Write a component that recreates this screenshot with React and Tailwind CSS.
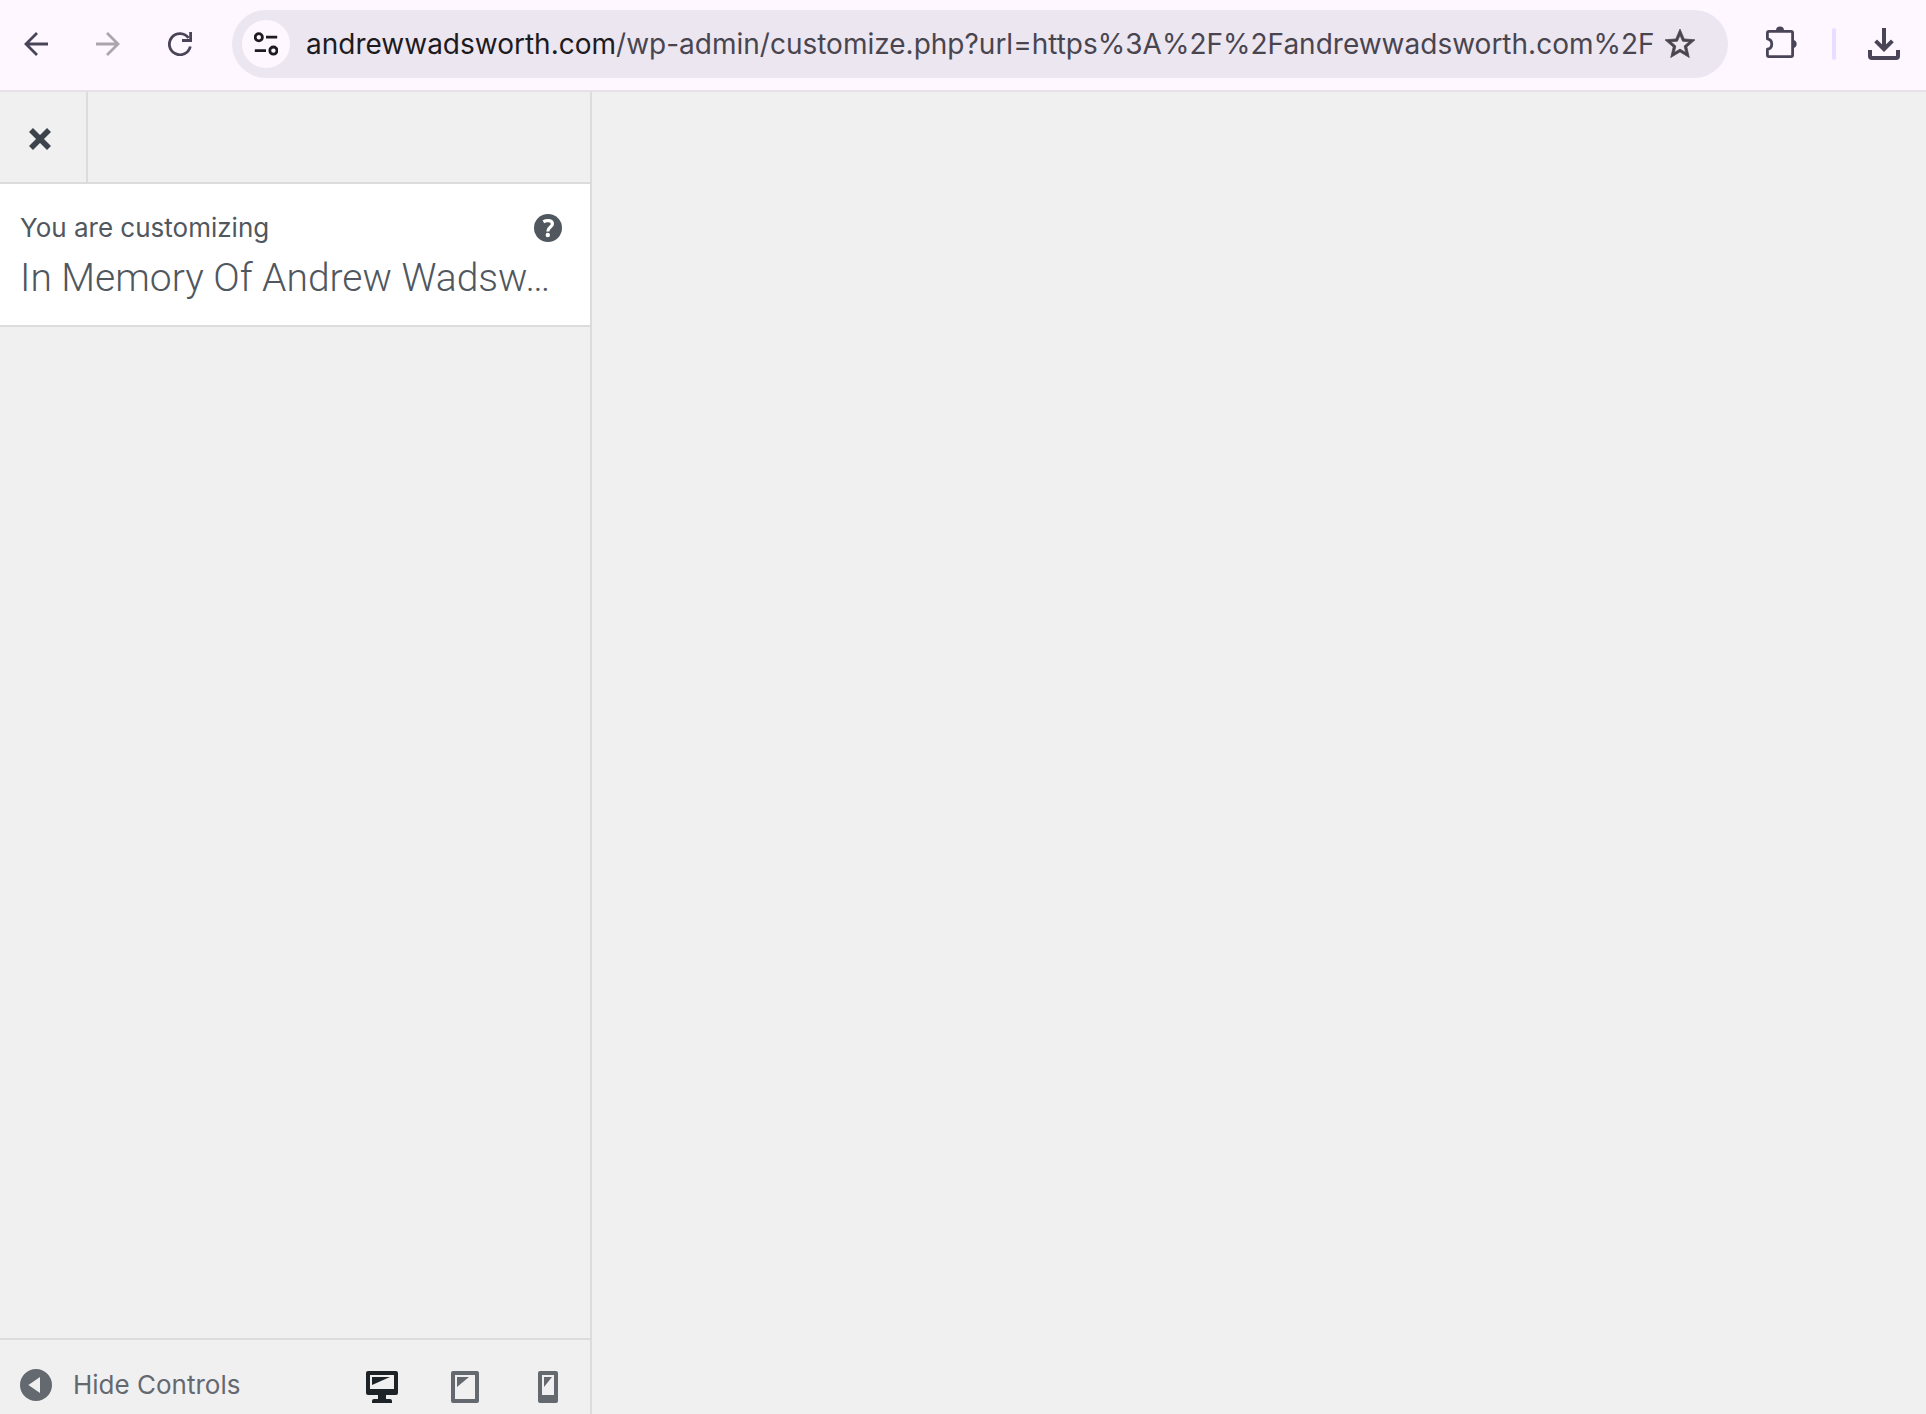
import React from "react";

function BackIcon() {
  return (
    <svg width="24" height="24" viewBox="0 0 24 24" fill="none" stroke="currentColor" strokeWidth="2.8" aria-hidden="true">
      <path d="M24 12H2.4M13 1 2 12l11 11" />
    </svg>
  );
}

function ReloadIcon() {
  return (
    <svg width="24" height="24" viewBox="0 0 24 24" fill="none" stroke="currentColor" aria-hidden="true">
      <path d="M22.3 14.5A10.6 10.6 0 1 1 20.6 6" strokeWidth="2.8" />
      <path d="M22.6 0V8.5H14" strokeWidth="2.8" />
    </svg>
  );
}

function TuneIcon() {
  return (
    <svg width="24" height="24" viewBox="0 0 24 24" fill="none" stroke="currentColor" strokeWidth="2.8" aria-hidden="true">
      <circle cx="4.8" cy="5.2" r="3.6" />
      <path d="M12 5.2h11.2M.8 18.6h11.2" />
      <circle cx="19.4" cy="18.6" r="3.6" />
    </svg>
  );
}

function StarIcon() {
  return (
    <svg width="36" height="36" viewBox="0 0 24 24" fill="currentColor" stroke="currentColor" strokeWidth="0.5" aria-hidden="true">
      <path d="M22 9.24l-7.19-.62L12 2 9.19 8.63 2 9.24l5.46 4.73L5.82 21 12 17.27 18.18 21l-1.63-7.03L22 9.24zM12 15.4l-3.76 2.27 1-4.28-3.32-2.88 4.38-.38L12 6.1l1.71 4.04 4.38.38-3.32 2.88 1 4.28L12 15.4z" />
    </svg>
  );
}

function ExtensionIcon() {
  return (
    <svg width="32" height="32" viewBox="0 0 32 32" fill="none" stroke="currentColor" aria-hidden="true">
      <path
        d="M3 5.4H25q1.6 0 1.6 1.6V29q0 1.6-1.6 1.6H3q-1.6 0-1.6-1.6V23.2C7.2 22.4 7.2 13.6 1.4 12.8V7q0-1.6 1.6-1.6Z"
        strokeWidth="2.8"
        strokeLinejoin="round"
      />
      <path d="M10 4.6a4 4.2 0 0 1 8 0zM27.6 14a4.4 4.2 0 0 1 0 8z" fill="currentColor" stroke="none" />
    </svg>
  );
}

function DownloadIcon() {
  return (
    <svg width="32" height="32" viewBox="0 0 32 32" fill="none" stroke="currentColor" strokeWidth="4" aria-hidden="true">
      <path d="M16 0v21M7.6 12.8 16 21.2l8.4-8.4" />
      <path d="M2 22v6q0 2 2 2h24q2 0 2-2v-6" />
    </svg>
  );
}

function CloseIcon() {
  return (
    <svg width="22" height="22" viewBox="0 0 22 22" fill="none" stroke="currentColor" strokeWidth="5.6" aria-hidden="true">
      <path d="M2 2 20 20M20 2 2 20" />
    </svg>
  );
}

function HelpIcon() {
  return (
    <svg width="28" height="28" viewBox="0 0 28 28" aria-hidden="true">
      <circle cx="14" cy="14" r="14" fill="currentColor" />
      <path d="M9.4 7.8C12 6.2 18.4 5.8 18.4 9.9c0 3.2-4.6 3.2-4.6 7.5" fill="none" stroke="#fff" strokeWidth="3.2" />
      <circle cx="13.8" cy="21" r="2.2" fill="#fff" />
    </svg>
  );
}

function CollapseIcon() {
  return (
    <svg width="32" height="32" viewBox="0 0 32 32" fill="currentColor" aria-hidden="true">
      <path fillRule="evenodd" d="M16 0a16 16 0 1 1 0 32a16 16 0 1 1 0-32zM20 8 8.4 16 20 24z" />
    </svg>
  );
}

function DesktopIcon() {
  return (
    <svg width="32" height="32" viewBox="0 0 32 32" fill="currentColor" aria-hidden="true">
      <path
        fillRule="evenodd"
        d="M2 0h28q2 0 2 2v20q0 2-2 2H20v4h4q2 0 2 2v2H6v-2q0-2 2-2h4v-4H2q-2 0-2-2V2q0-2 2-2zM4 4v14h24V4zM6 6h18L6 14z"
      />
    </svg>
  );
}

function TabletIcon() {
  return (
    <svg width="28" height="32" viewBox="0 0 28 32" fill="currentColor" aria-hidden="true">
      <path fillRule="evenodd" d="M2 0h24q2 0 2 2v28q0 2-2 2H2q-2 0-2-2V2q0-2 2-2zM4 4v24h20V4zM6 6h12L6 16z" />
    </svg>
  );
}

function PhoneIcon() {
  return (
    <svg width="20" height="32" viewBox="0 0 20 32" fill="currentColor" aria-hidden="true">
      <path fillRule="evenodd" d="M2 0h16q2 0 2 2v28q0 2-2 2H2q-2 0-2-2V2q0-2 2-2zM4 4v20h12V4zM6 6h8L6 16z" />
    </svg>
  );
}

function BrowserBar() {
  return (
    <header className="flex items-center border-b-2 border-[#e7e0e8] bg-[#fef7ff] pt-[10px] pb-3 pr-[26px] pl-6 text-[#4a4458]">
      <nav className="flex items-center gap-12" aria-label="History">
        <button type="button" aria-label="Back"><BackIcon /></button>
        <button type="button" aria-label="Forward" disabled className="rotate-180 text-[#aba5ad]"><BackIcon /></button>
        <button type="button" aria-label="Reload"><ReloadIcon /></button>
      </nav>
      <div className="ml-10 flex h-[68px] min-w-0 flex-1 items-center rounded-full bg-[#ece6f1] pr-[30px] pl-[10px]">
        <button type="button" aria-label="View site information" className="flex size-12 shrink-0 items-center justify-center rounded-full bg-[#fef7ff] text-[#1d1b20]">
          <TuneIcon />
        </button>
        <a href="#address" className="ml-4 min-w-0 flex-1 overflow-hidden text-[28px] leading-9 whitespace-nowrap text-[#49454f]">
          <span className="text-[#1d1b20]">andrewwadsworth.com</span>
          /wp-admin/customize.php?url=https%3A%2F%2Fandrewwadsworth.com%2F
        </a>
        <button type="button" aria-label="Bookmark this tab" className="shrink-0 text-[#49454f]"><StarIcon /></button>
      </div>
      <div className="ml-[38px] flex items-center">
        <button type="button" aria-label="Extensions" className="pb-1"><ExtensionIcon /></button>
        <span className="mr-8 ml-[34px] h-8 w-1 rounded-full bg-[#eaddff]" />
        <button type="button" aria-label="Downloads"><DownloadIcon /></button>
      </div>
    </header>
  );
}

const devices = [
  { label: "Desktop", Icon: DesktopIcon, active: true },
  { label: "Tablet", Icon: TabletIcon, active: false },
  { label: "Mobile", Icon: PhoneIcon, active: false },
];

function Sidebar() {
  return (
    <aside className="flex w-[592px] shrink-0 flex-col border-r-2 border-[#dcdcde]">
      <div className="flex h-[92px] border-b-2 border-[#dcdcde]">
        <button type="button" aria-label="Close the Customizer" className="flex w-[88px] items-center justify-center border-r-2 border-[#dcdcde] pt-1 pr-[6px] text-[#3c434a]">
          <CloseIcon />
        </button>
      </div>
      <section className="border-b-2 border-[#dcdcde] bg-white px-5 pt-6 pb-[21px] text-[#50575e]">
        <div className="flex items-center justify-between pr-2">
          <p className="text-[26px] leading-10">You are customizing</p>
          <button type="button" aria-label="Help"><HelpIcon /></button>
        </div>
        <h1 className="mt-1 font-[Roboto,sans-serif] text-[39px] leading-[52px] font-light whitespace-nowrap">In Memory Of Andrew Wadsw…</h1>
      </section>
      <footer className="mt-auto flex h-[76px] items-start justify-between border-t-2 border-[#dcdcde] pl-5 text-[#646970]">
        <button type="button" className="mt-[29px] flex items-center gap-[21px] text-[26px] leading-8">
          <CollapseIcon />
          Hide Controls
        </button>
        <div className="mt-[31px] mr-px flex">
          {devices.map(({ label, Icon, active }) => (
            <button
              key={label}
              type="button"
              aria-label={`Enter ${label.toLowerCase()} preview mode`}
              aria-pressed={active}
              className={active ? "flex w-[83px] justify-center text-[#1d2327]" : "flex w-[83px] justify-center"}
            >
              <Icon />
            </button>
          ))}
        </div>
      </footer>
    </aside>
  );
}

export default function App() {
  return (
    <div className="flex min-h-screen flex-col bg-[#f0f0f1] font-['Inter','Liberation_Sans',sans-serif]">
      <BrowserBar />
      <div className="flex flex-1">
        <Sidebar />
        <main className="flex-1" aria-label="Site preview" />
      </div>
    </div>
  );
}
